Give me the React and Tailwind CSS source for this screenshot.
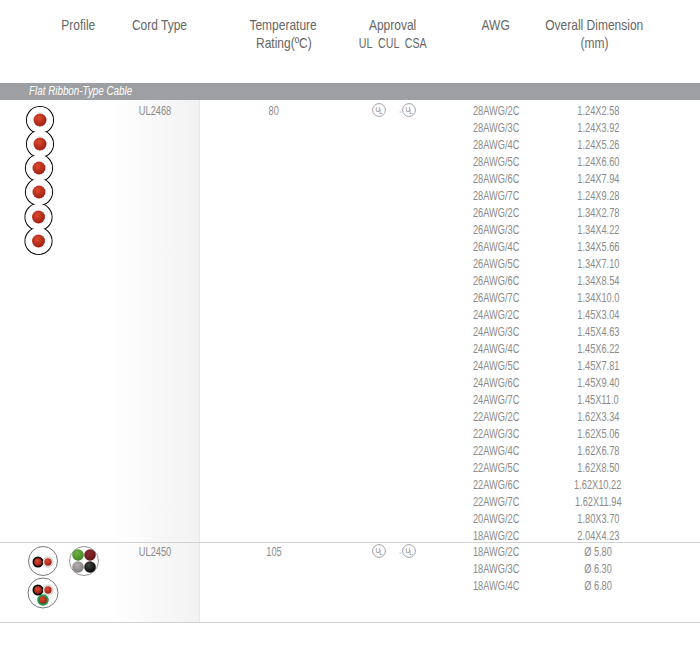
const rows = [
  ['28AWG/2C', '1.24X2.58'], ['28AWG/3C', '1.24X3.92'], ['28AWG/4C', '1.24X5.26'], ['28AWG/5C', '1.24X6.60'],
  ['28AWG/6C', '1.24X7.94'], ['28AWG/7C', '1.24X9.28'], ['26AWG/2C', '1.34X2.78'], ['26AWG/3C', '1.34X4.22'],
  ['26AWG/4C', '1.34X5.66'], ['26AWG/5C', '1.34X7.10'], ['26AWG/6C', '1.34X8.54'], ['26AWG/7C', '1.34X10.0'],
  ['24AWG/2C', '1.45X3.04'], ['24AWG/3C', '1.45X4.63'], ['24AWG/4C', '1.45X6.22'], ['24AWG/5C', '1.45X7.81'],
  ['24AWG/6C', '1.45X9.40'], ['24AWG/7C', '1.45X11.0'], ['22AWG/2C', '1.62X3.34'], ['22AWG/3C', '1.62X5.06'],
  ['22AWG/4C', '1.62X6.78'], ['22AWG/5C', '1.62X8.50'], ['22AWG/6C', '1.62X10.22'], ['22AWG/7C', '1.62X11.94'],
  ['20AWG/2C', '1.80X3.70'], ['18AWG/2C', '2.04X4.23'],
];

const rows2 = [['18AWG/2C', 'Ø 5.80'], ['18AWG/3C', 'Ø 6.30'], ['18AWG/4C', 'Ø 6.80']];

const ribbon = [[40, 20], [40, 44], [39, 68], [39, 92], [38.5, 117], [38.5, 141]];

function Narrow({ children }) {
  return <span className="inline-block scale-x-[0.77] whitespace-pre">{children}</span>;
}

function HeadLine({ children }) {
  return <span className="scale-x-[0.8] whitespace-pre">{children}</span>;
}

function Head({ className, children }) {
  return (
    <div className={`flex flex-col items-center text-[15px] leading-[18px] text-[#666] ${className}`}>
      {children}
    </div>
  );
}

function Balls() {
  return (
    <defs>
      <radialGradient id="red" cx="40%" cy="35%" r="70%">
        <stop offset="0%" stopColor="#dc4a2e" />
        <stop offset="100%" stopColor="#9c1c12" />
      </radialGradient>
      <radialGradient id="green" cx="40%" cy="35%" r="70%">
        <stop offset="0%" stopColor="#6db33f" />
        <stop offset="100%" stopColor="#3f7f25" />
      </radialGradient>
      <radialGradient id="maroon" cx="40%" cy="35%" r="70%">
        <stop offset="0%" stopColor="#8a2a30" />
        <stop offset="100%" stopColor="#5a1518" />
      </radialGradient>
      <radialGradient id="grey" cx="40%" cy="35%" r="70%">
        <stop offset="0%" stopColor="#b5b0ad" />
        <stop offset="100%" stopColor="#7f7a78" />
      </radialGradient>
      <radialGradient id="black" cx="40%" cy="35%" r="70%">
        <stop offset="0%" stopColor="#444" />
        <stop offset="100%" stopColor="#000" />
      </radialGradient>
    </defs>
  );
}

function RibbonCable() {
  return (
    <svg width="100" height="160" className="block">
      <Balls />
      {ribbon.map(([x, y], i) => (
        <circle key={i} cx={x} cy={y} r="13.5" fill="#fff" stroke="#111" strokeWidth="1.2" />
      ))}
      {ribbon.map(([x, y], i) => (
        <circle key={i} cx={x} cy={y} r="12.9" fill="#fff" />
      ))}
      {ribbon.map(([x, y], i) => (
        <circle key={i} cx={x} cy={y} r="6.5" fill="url(#red)" />
      ))}
    </svg>
  );
}

function RoundCables() {
  return (
    <svg width="100" height="79" className="block">
      <circle cx="43" cy="18" r="14.5" fill="#fff" stroke="#555" strokeWidth="0.8" />
      <circle cx="38" cy="19" r="5.5" fill="#0a0a0a" />
      <circle cx="38" cy="19" r="3.8" fill="url(#red)" />
      <circle cx="48" cy="19" r="5" fill="#fff" stroke="#999" strokeWidth="0.6" />
      <circle cx="48" cy="19" r="3.7" fill="url(#red)" />

      <circle cx="84" cy="18" r="14.5" fill="#fff" stroke="#777" strokeWidth="0.8" />
      <circle cx="78" cy="12" r="5.8" fill="url(#green)" />
      <circle cx="90" cy="12" r="5.8" fill="url(#maroon)" />
      <circle cx="78" cy="24" r="5.8" fill="url(#grey)" />
      <circle cx="90" cy="24" r="5.8" fill="url(#black)" />

      <circle cx="43" cy="50" r="15" fill="#fff" stroke="#555" strokeWidth="0.8" />
      <circle cx="38" cy="47" r="5.5" fill="#0a0a0a" />
      <circle cx="38" cy="47" r="3.8" fill="url(#red)" />
      <circle cx="48" cy="47" r="5" fill="#fff" stroke="#999" strokeWidth="0.6" />
      <circle cx="48" cy="47" r="3.7" fill="url(#red)" />
      <circle cx="43" cy="57" r="5.8" fill="#1f9a4b" />
      <circle cx="43" cy="57" r="3.8" fill="url(#red)" />
    </svg>
  );
}

function UlMark({ prefix }) {
  return (
    <svg width="22" height="14" viewBox="0 0 22 14" className="block">
      {prefix && (
        <text x="4.5" y="10" fontSize="4" fill="#999" fontFamily="Liberation Sans, sans-serif">c</text>
      )}
      <circle cx="14" cy="7" r="6.4" fill="none" stroke="#999" strokeWidth="0.9" />
      <text x="10.4" y="8.5" fontSize="6.5" fill="#888" fontFamily="Liberation Sans, sans-serif">U</text>
      <text x="14.2" y="10.5" fontSize="6.5" fill="#888" fontFamily="Liberation Sans, sans-serif">L</text>
    </svg>
  );
}

function DataColumns({ items, pad }) {
  return (
    <>
      <div className={`w-[98px] text-center ${pad}`}>
        {items.map(([awg]) => (
          <div key={awg} className="h-[17px] leading-[17px]"><Narrow>{awg}</Narrow></div>
        ))}
      </div>
      <div className={`w-[106px] text-center ${pad}`}>
        {items.map(([, dim]) => (
          <div key={dim} className="h-[17px] leading-[17px]"><Narrow>{dim}</Narrow></div>
        ))}
      </div>
    </>
  );
}

function CableRow({ profile, cord, rating, items, className, pad }) {
  return (
    <div className={`flex border-b border-[#d2d2d2] text-[12px] leading-[17px] text-[#8a8a8a] ${className}`}>
      <div className="w-[100px]">{profile}</div>
      <div className={`w-[100px] border-r border-[#e9e9e9] bg-gradient-to-r from-white from-10% to-[#f2f2f2] pl-[11px] text-center ${pad}`}>
        <Narrow>{cord}</Narrow>
      </div>
      <div className={`w-[148px] text-center ${pad}`}><Narrow>{rating}</Narrow></div>
      <div className={`w-[99px] ${pad}`}>
        <div className="flex gap-2 pl-[17px]">
          <UlMark />
          <UlMark prefix />
        </div>
      </div>
      <DataColumns items={items} pad={pad} />
    </div>
  );
}

export default function App() {
  return (
    <div className="h-[663px] w-[700px] overflow-hidden bg-white font-['Liberation_Sans',sans-serif]">
      {/* Header */}
      <div className="flex h-[83px] pt-4">
        <Head className="ml-[48px] w-[60px]"><HeadLine>Profile</HeadLine></Head>
        <Head className="w-[102px]"><HeadLine>Cord Type</HeadLine></Head>
        <Head className="ml-[18px] w-[111px]">
          <HeadLine>Temperature</HeadLine>
          <HeadLine>Rating(ºC)</HeadLine>
        </Head>
        <Head className="w-[108px]">
          <HeadLine>Approval</HeadLine>
          <span className="scale-x-[0.71] whitespace-pre">UL  CUL  CSA</span>
        </Head>
        <Head className="w-[98px]"><HeadLine>AWG</HeadLine></Head>
        <Head className="w-[98px]">
          <HeadLine>Overall Dimension</HeadLine>
          <HeadLine>(mm)</HeadLine>
        </Head>
      </div>

      {/* Section band */}
      <div className="h-[17px] bg-[#9d9fa2] pl-[29px] text-[12px] italic leading-[17px] text-white">
        <span className="inline-block origin-left scale-x-[0.82] whitespace-pre">Flat Ribbon-Type Cable</span>
      </div>

      {/* Rows */}
      <CableRow className="h-[443px]" pad="pt-[2.5px]" profile={<RibbonCable />} cord="UL2468" rating="80" items={rows} />
      <CableRow className="h-[80px]" pad="pt-[1px]" profile={<RoundCables />} cord="UL2450" rating="105" items={rows2} />
    </div>
  );
}
